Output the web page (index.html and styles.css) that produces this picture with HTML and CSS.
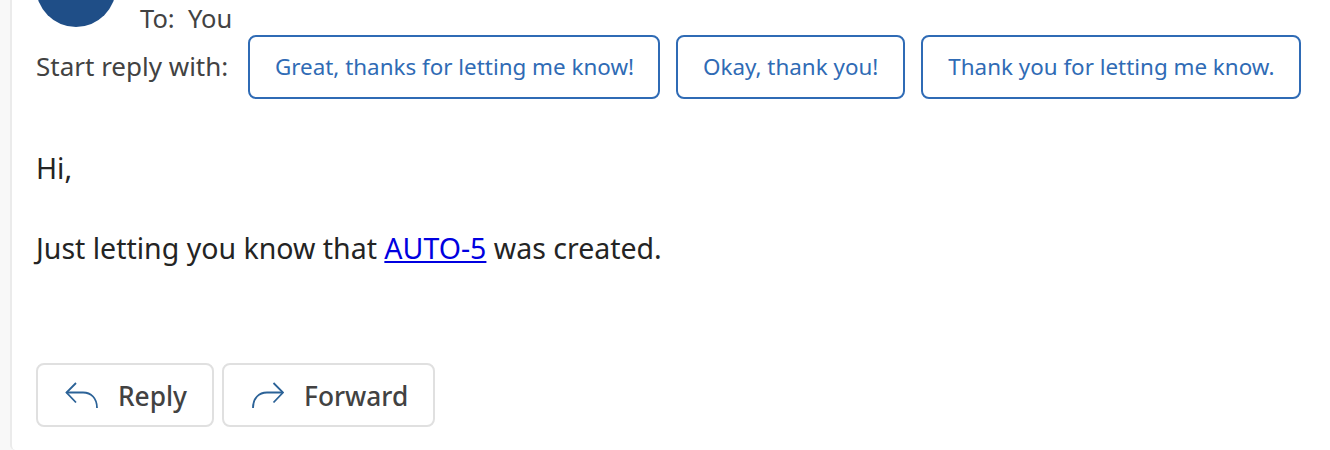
FILE: index.html
```html
<!DOCTYPE html>
<html lang="en">
<head>
    <meta charset="UTF-8">
    <title>AUTO-5 was created</title>
    <link rel="stylesheet" href="styles.css">
</head>
<body>
    <div class="message">
        <div class="sender">
            <div class="avatar"></div>
            <div class="recipients">To:&nbsp; You</div>
        </div>

        <div class="quick-replies">
            <span class="quick-label">Start reply with:</span>
            <a href="#" class="quick-btn">Great, thanks for letting me know!</a>
            <a href="#" class="quick-btn">Okay, thank you!</a>
            <a href="#" class="quick-btn">Thank you for letting me know.</a>
        </div>

        <div class="body-text">
            <p>Hi,</p>
            <p>Just letting you know that <a href="#">AUTO-5</a> was created.</p>
        </div>

        <div class="actions">
            <a href="#" class="action-btn">
                <svg width="34" height="28" viewBox="0 0 34 28" fill="none" stroke="#2b6297" stroke-width="1.8">
                    <path d="M12 1 L2.5 10.5 L12 20.5"/>
                    <path d="M2.5 10.5 H19 C27 10.5 33 16 33 26"/>
                </svg>
                Reply
            </a>
            <a href="#" class="action-btn">
                <svg width="34" height="28" viewBox="0 0 34 28" fill="none" stroke="#2b6297" stroke-width="1.8">
                    <path d="M23.5 1 L33 10.5 L23.5 20.5"/>
                    <path d="M33 10.5 H17 C9 10.5 3 16 3 26"/>
                </svg>
                Forward
            </a>
        </div>
    </div>
</body>
</html>
```

FILE: styles.css
```css
* {
    margin: 0;
    padding: 0;
    box-sizing: border-box;
}

html, body {
    height: 450px;
    overflow: hidden;
}

body {
    background: #f8f8f8;
    font-family: "Noto Sans", "Open Sans", sans-serif;
    color: #242424;
}

.message {
    height: 450px;
    margin-left: 10px;
    padding: 0 24px;
    background: #fff;
    border-left: 2px solid #ebebeb;
    border-bottom-left-radius: 5px;
}

.sender {
    display: flex;
    height: 35px;
}

.avatar {
    width: 80px;
    height: 80px;
    margin-top: -53px;
    margin-right: 24px;
    flex-shrink: 0;
    border-radius: 50%;
    background: #1f4e87;
}

.recipients {
    font-size: 25.5px;
    line-height: 34px;
    color: #424242;
    padding-top: 1px;
}

.quick-replies {
    display: flex;
    align-items: center;
    height: 64px;
    font-size: 26px;
}

.quick-label {
    width: 212px;
    flex-shrink: 0;
    padding-bottom: 2px;
    color: #424242;
    white-space: nowrap;
}

.quick-btn {
    display: flex;
    align-items: center;
    height: 64px;
    margin-right: 16px;
    padding: 0 25px 2px;
    font-size: 22.4px;
    color: #2f6bb5;
    text-decoration: none;
    background: #fff;
    border: 2px solid #2f6bb5;
    border-radius: 8px;
    white-space: nowrap;
}

.quick-btn:first-of-type {
    padding-right: 24px;
}

.body-text {
    margin-top: 49px;
    font-size: 28.5px;
    line-height: 40px;
}

.body-text p {
    margin-bottom: 40px;
}

.body-text a {
    color: #0000e0;
}

.actions {
    display: flex;
    gap: 8px;
    margin-top: 95px;
}

.action-btn {
    display: flex;
    align-items: center;
    gap: 20px;
    height: 64px;
    padding: 2px 25px 0 26px;
    font-size: 26.3px;
    font-weight: 500;
    color: #424242;
    text-decoration: none;
    background: #fff;
    border: 2px solid #e0e0e0;
    border-radius: 8px;
}
```
